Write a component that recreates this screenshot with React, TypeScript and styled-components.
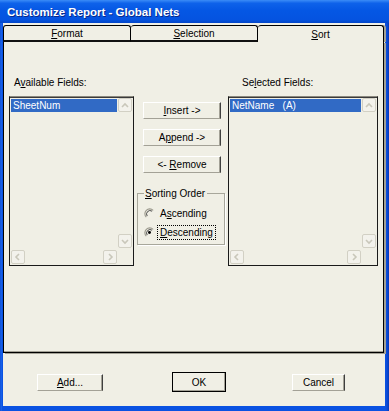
import styled, { createGlobalStyle } from "styled-components"

const GlobalStyle = createGlobalStyle`
  html, body {
    margin: 0;
    padding: 0;
    background: #0a52e2;
  }
  body {
    font-family: "Liberation Sans", Arial, sans-serif;
    font-size: 10px;
    color: #000;
  }
`

const FACE = "#f0efe5"

const Window = styled.div`
  width: 389px;
  height: 411px;
  display: flex;
  flex-direction: column;
  background: linear-gradient(90deg, #0840c8 0, #1f6cf0 1px, #0a52e2 2px, #0a52e2 385px, #0a4ad8 387px, #0638b4 389px);
  box-sizing: border-box;
`

const TitleBar = styled.div`
  height: 23px;
  flex: none;
  display: flex;
  align-items: center;
  padding-left: 7px;
  background: linear-gradient(180deg, #3b8cf7 0%, #0e62ea 14%, #0557e4 45%, #0553e0 85%, #0446c8 100%);
  color: #fff;
  font-weight: bold;
  font-size: 11.5px;
  text-shadow: 1px 1px 0 #0a2a8a;
`

const Body = styled.div`
  flex: 1;
  margin: 0 4px 5px 3px;
  background: ${FACE};
  display: flex;
  flex-direction: column;
`

const TabStrip = styled.div`
  display: flex;
  margin-top: 2px;
  height: 17px;
  margin-right: 1px;
`

const Tab = styled.div<{ $active?: boolean; $w?: number }>`
  ${(p) => (p.$w ? `width: ${p.$w}px; flex: none;` : "flex: 1;")}
  box-sizing: border-box;
  display: flex;
  align-items: center;
  justify-content: center;
  border: 1px solid #000;
  border-left-width: ${(p) => (p.$w === 128 ? 1 : 0)}px;
  border-bottom: ${(p) => (p.$active ? "none" : "2px solid #111")};
  border-radius: 3px 3px 0 0;
  box-shadow: ${(p) => (p.$active ? "2px 0 0 #a3a196" : "none")};
  background: ${FACE};
  padding-top: 1px;
  u {
    text-decoration: underline;
  }
`

const Panel = styled.div`
  height: 311px;
  box-sizing: border-box;
  margin-right: 1px;
  border: 1px solid #000;
  border-top: none;
  box-shadow: 2px 1px 0 #a3a196, inset 0 -1px 0 #a3a196;
  display: flex;
  align-items: flex-start;
  padding: 35px 0 0 5px;
  gap: 3px;
`

const FieldColumn = styled.div<{ $labelIndent: number; $w: number }>`
  width: ${(p) => p.$w}px;
  display: flex;
  flex-direction: column;
  > span {
    height: 12px;
    line-height: 12px;
    margin: 0 0 7px ${(p) => p.$labelIndent}px;
  }
`

const ListBox = styled.div`
  height: 170px;
  box-sizing: border-box;
  border: 1px solid #1a1a1a;
  border-top-color: #8a887e;
  box-shadow: inset 0 1px 0 #3a3a3a;
  display: grid;
  grid-template-columns: 1fr 16px;
  grid-template-rows: 1fr 16px;
  padding: 1px 0 0 1px;
`

const Items = styled.div`
  padding-top: 1px;
`

const Item = styled.div`
  background: #316ac5;
  color: #fff;
  height: 13px;
  line-height: 13px;
  padding-left: 2px;
  white-space: pre;
`

const VScroll = styled.div`
  display: flex;
  flex-direction: column;
  justify-content: space-between;
  align-items: center;
  padding-bottom: 1px;
`

const HScroll = styled.div`
  display: flex;
  justify-content: space-between;
  align-items: center;
`

const ArrowBox = styled.div`
  width: 14px;
  height: 14px;
  box-sizing: border-box;
  border: 1px solid #d2d0c4;
  border-radius: 2px;
  background: #f3f2ec;
  display: flex;
  align-items: center;
  justify-content: center;
`

const chevrons: Record<string, string> = {
  up: "M3 8 L6 5 L9 8",
  down: "M3 5 L6 8 L9 5",
  left: "M7 3 L4 6 L7 9",
  right: "M5 3 L8 6 L5 9",
}

function Arrow({ dir }: { dir: "up" | "down" | "left" | "right" }) {
  return (
    <ArrowBox>
      <svg width="12" height="12" viewBox="0 0 12 12">
        <path d={chevrons[dir]} fill="none" stroke="#c9c7ba" strokeWidth="1.6" />
      </svg>
    </ArrowBox>
  )
}

function FieldList({ item }: { item: string }) {
  return (
    <ListBox>
      <Items>
        <Item>{item}</Item>
      </Items>
      <VScroll>
        <Arrow dir="up" />
        <Arrow dir="down" />
      </VScroll>
      <HScroll>
        <Arrow dir="left" />
        <Arrow dir="right" />
      </HScroll>
      <div />
    </ListBox>
  )
}

const Middle = styled.div`
  width: 88px;
  display: flex;
  flex-direction: column;
  padding-top: 25px;
`

const Button = styled.button<{ $w: number; $default?: boolean }>`
  width: ${(p) => p.$w}px;
  height: ${(p) => (p.$default ? 20 : 17)}px;
  box-sizing: border-box;
  font: inherit;
  color: #000;
  background: ${FACE};
  padding: 0;
  border: 1px solid;
  border-color: ${(p) => (p.$default ? "#000" : "#fff #3f3f3f #a3a196 #fff")};
  box-shadow: ${(p) => (p.$default ? "inset -1px -1px 0 #a3a196" : "inset -1px 0 0 #a3a196")};
  u {
    text-decoration: underline;
  }
`

const SideButtons = styled.div`
  display: flex;
  flex-direction: column;
  gap: 10px;
  padding-left: 6px;
`

const Group = styled.fieldset`
  margin: 15px 0 0 0;
  padding: 8px 0 0 6px;
  height: 57px;
  box-sizing: border-box;
  border: 1px solid #a8a79b;
  box-shadow: 1px 1px 0 #fff;
  display: flex;
  flex-direction: column;
  gap: 7px;
  legend {
    padding: 0 2px 0 1px;
    margin-left: 0;
    line-height: 11px;
  }
`

const RadioRow = styled.label`
  display: flex;
  align-items: center;
  gap: 4px;
  height: 12px;
`

const RadioText = styled.span<{ $focus?: boolean }>`
  outline: ${(p) => (p.$focus ? "1px dotted #000" : "none")};
  outline-offset: 1px;
  padding: 0 1px;
`

function Radio({ checked }: { checked?: boolean }) {
  return (
    <svg width="11" height="11" viewBox="0 0 12 12">
      <path d="M10 2.5 A5 5 0 0 0 2.5 10" fill="none" stroke="#9a988c" strokeWidth="1.2" />
      <path d="M8.8 3.5 A3.8 3.8 0 0 0 3.5 8.8" fill="none" stroke="#3c3c3c" strokeWidth="1" />
      {checked && <circle cx="6" cy="6" r="1.6" fill="#000" />}
    </svg>
  )
}

const ButtonRow = styled.div`
  display: flex;
  align-items: center;
  margin-top: 19px;
  padding-left: 34px;
`

const Spacer = styled.div<{ $w: number }>`
  width: ${(p) => p.$w}px;
`

export default function App() {
  return (
    <>
      <GlobalStyle />
      <Window>
        <TitleBar>Customize Report - Global Nets</TitleBar>
        <Body>
          <TabStrip>
            <Tab $w={128}>
              <span><u>F</u>ormat</span>
            </Tab>
            <Tab $w={127}>
              <span><u>S</u>election</span>
            </Tab>
            <Tab $active>
              <span><u>S</u>ort</span>
            </Tab>
          </TabStrip>
          <Panel>
            <FieldColumn $w={125} $labelIndent={5}>
              <span>A<u>v</u>ailable Fields:</span>
              <FieldList item="SheetNum" />
            </FieldColumn>
            <Middle>
              <SideButtons>
                <Button $w={78}><u>I</u>nsert -&gt;</Button>
                <Button $w={78}>A<u>p</u>pend -&gt;</Button>
                <Button $w={78}>&lt;- <u>R</u>emove</Button>
              </SideButtons>
              <Group>
                <legend><u>S</u>orting Order</legend>
                <RadioRow>
                  <Radio />
                  <RadioText>A<u>s</u>cending</RadioText>
                </RadioRow>
                <RadioRow>
                  <Radio checked />
                  <RadioText $focus><u>D</u>escending</RadioText>
                </RadioRow>
              </Group>
            </Middle>
            <FieldColumn $w={150} $labelIndent={14}>
              <span>Se<u>l</u>ected Fields:</span>
              <FieldList item="NetName   (A)" />
            </FieldColumn>
          </Panel>
          <ButtonRow>
            <Button $w={66}><u>A</u>dd...</Button>
            <Spacer $w={69} />
            <Button $w={54} $default>OK</Button>
            <Spacer $w={66} />
            <Button $w={53}>Cancel</Button>
          </ButtonRow>
        </Body>
      </Window>
    </>
  )
}
